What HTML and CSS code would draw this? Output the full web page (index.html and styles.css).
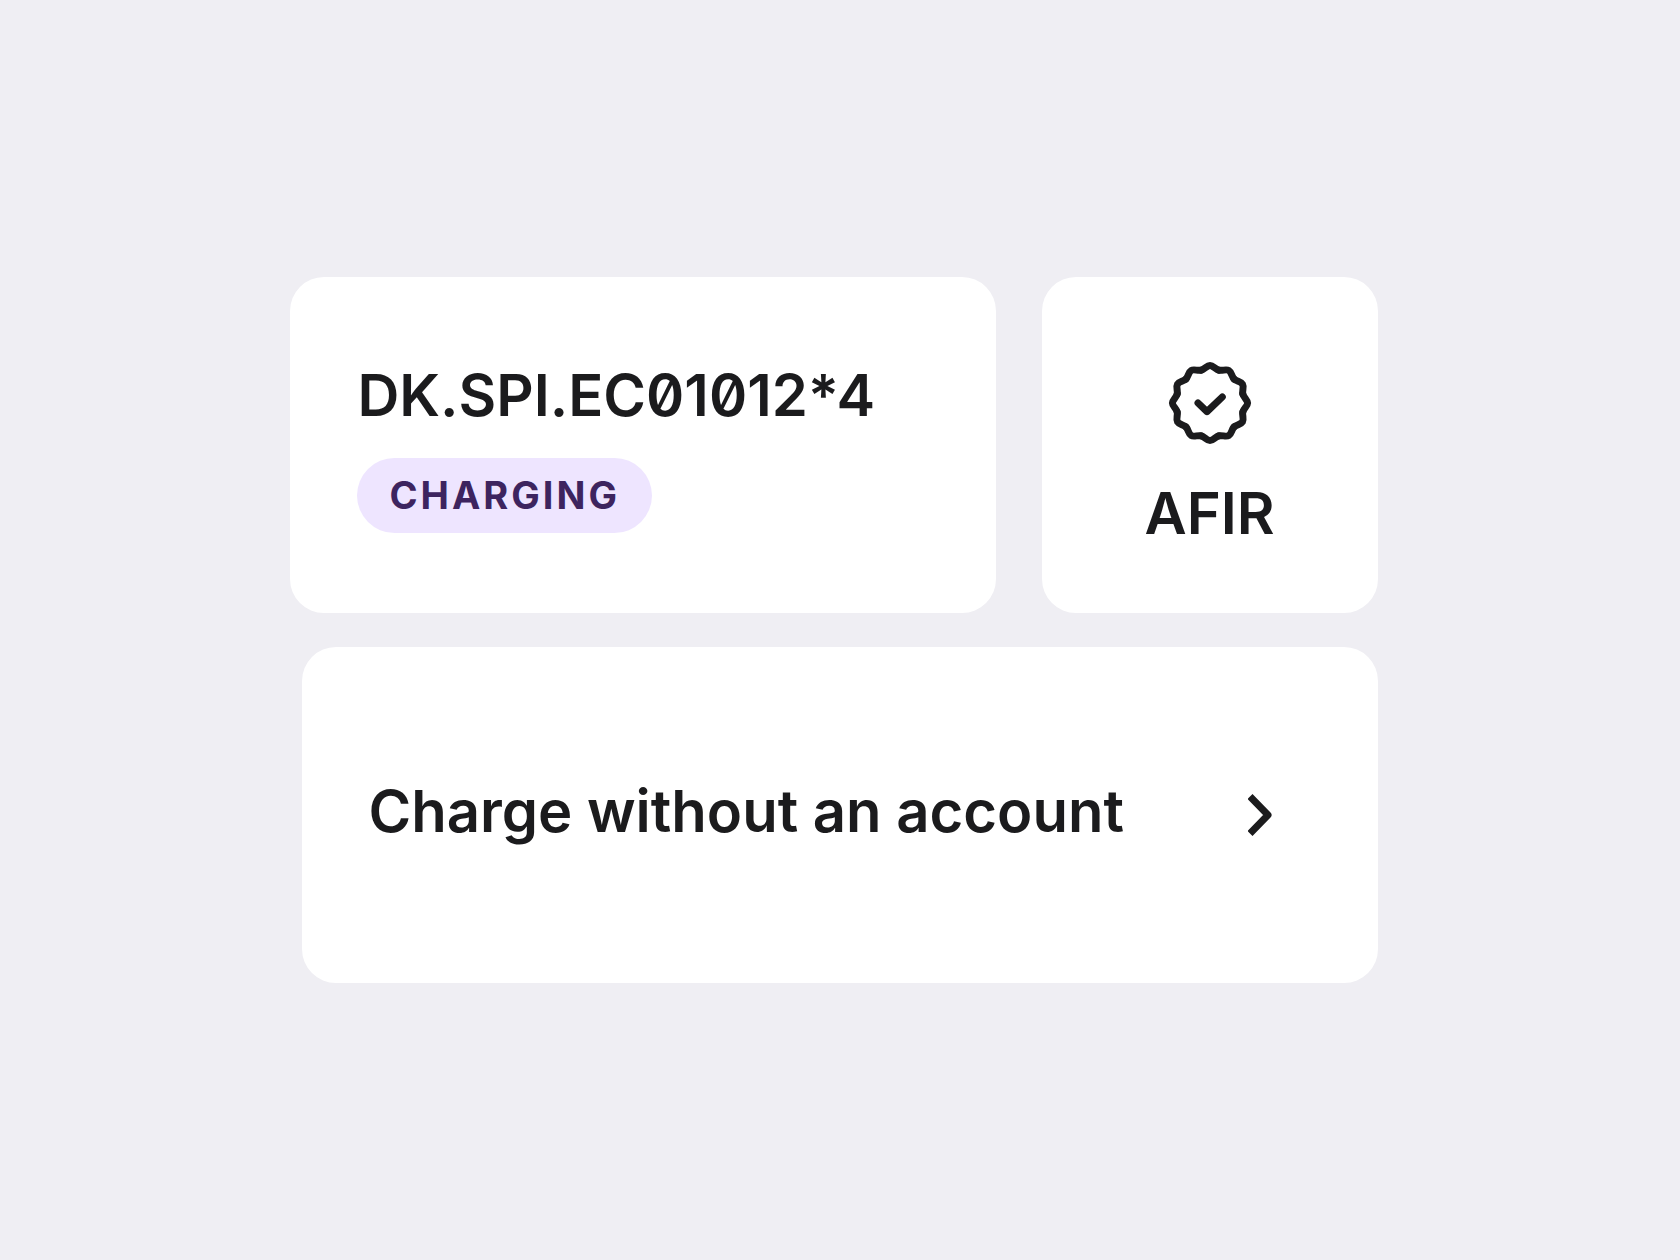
FILE: index.html
```html
<!DOCTYPE html>
<html lang="en">
<head>
    <meta charset="UTF-8">
    <meta name="viewport" content="width=device-width, initial-scale=1.0">
    <title>Charging station</title>
    <link rel="stylesheet" href="styles.css">
</head>
<body>
    <main class="board">
        <div class="top-row">
            <section class="card station">
                <h1 class="title station-id">DK.SPI.EC01012*4</h1>
                <span class="status">CHARGING</span>
            </section>
            <section class="card badge">
                <svg class="badge-icon" viewBox="-42 -42 84 84" aria-hidden="true">
                    <defs>
                        <path id="scallop" d="M-8.8 -32.84C-5.4 -33.75 -3.2 -37.6 0 -37.6C3.2 -37.6 5.4 -33.75 8.8 -32.84"/>
                    </defs>
                    <use href="#scallop"/>
                    <use href="#scallop" transform="rotate(30)"/>
                    <use href="#scallop" transform="rotate(60)"/>
                    <use href="#scallop" transform="rotate(90)"/>
                    <use href="#scallop" transform="rotate(120)"/>
                    <use href="#scallop" transform="rotate(150)"/>
                    <use href="#scallop" transform="rotate(180)"/>
                    <use href="#scallop" transform="rotate(210)"/>
                    <use href="#scallop" transform="rotate(240)"/>
                    <use href="#scallop" transform="rotate(270)"/>
                    <use href="#scallop" transform="rotate(300)"/>
                    <use href="#scallop" transform="rotate(330)"/>
                    <path d="M-12 0L-3 8.6L12.3 -6"/>
                </svg>
                <h2 class="title">AFIR</h2>
            </section>
        </div>
        <a class="card action" href="#">
            <span class="title action-label">Charge without an account</span>
            <svg class="chevron" viewBox="0 0 24 44" aria-hidden="true">
                <path d="M2 3.5L20 22L2 40.5"/>
            </svg>
        </a>
    </main>
</body>
</html>
```

FILE: styles.css
```css
* {
    box-sizing: border-box;
}
body {
    font-family: Inter, "Liberation Sans", sans-serif;
    margin: 0;
    min-height: 100vh;
    display: flex;
    align-items: center;
    justify-content: center;
    background: #efeef3;
    color: #1b1b1d;
}
.board {
    width: 64%;
    display: flex;
    flex-direction: column;
    gap: 34px;
}
.top-row {
    display: flex;
    gap: 46px;
    margin-left: -12px;
}
.card {
    min-height: 336px;
    border-radius: 34px;
    background: #fff;
}
.title {
    margin: 0;
    font-size: 58px;
    font-weight: 600;
    line-height: 72px;
}
.station {
    flex: 1;
    display: flex;
    flex-direction: column;
    align-items: flex-start;
    padding: 82px 67px 80px;
    gap: 27px;
}
/* slashed zeros, raised asterisk */
.station-id {
    font-feature-settings: "zero", "calt" 0;
    white-space: nowrap;
}
.status {
    padding: 14px 32px;
    border-radius: 38px;
    background: #eee5ff;
    color: #3d245f;
    font-size: 38px;
    font-weight: 700;
    line-height: 47px;
    letter-spacing: 3px;
}
.badge {
    flex: 0 0 336px;
    display: flex;
    flex-direction: column;
    align-items: center;
    padding: 84px 32px 64px;
    gap: 32px;
}
.badge-icon {
    width: 84px;
    height: 84px;
    fill: none;
    stroke: currentColor;
    stroke-width: 7;
    stroke-linecap: round;
    stroke-linejoin: round;
}
.action {
    display: flex;
    align-items: center;
    justify-content: space-between;
    padding: 0 106px 0 66px;
    color: inherit;
    text-decoration: none;
}
.action-label {
    padding-bottom: 8px;
}
.chevron {
    width: 24px;
    height: 44px;
    fill: none;
    stroke: currentColor;
    stroke-width: 7;
    stroke-linejoin: round;
}
```
